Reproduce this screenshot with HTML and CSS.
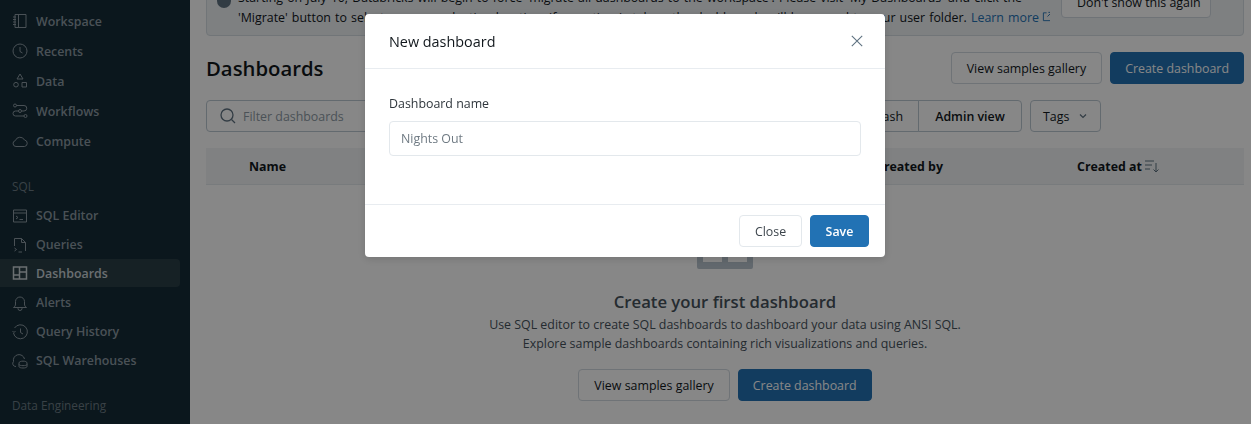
FILE: index.html
```html
<!DOCTYPE html>
<html lang="en">
<head>
<meta charset="utf-8">
<title>Dashboards</title>
<link rel="stylesheet" href="styles.css">
</head>
<body>
<div class="app">
  <nav class="sidebar">
    <ul class="nav-list nav-top">
      <li class="nav-item"><svg class="nav-icon" viewBox="0 0 16 16"><path d="M3 1.500h11v13H3zM6.500 1.500v13M1 4h3M1 6.500h3M1 9h3M1 11.500h3"/></svg>Workspace</li>
      <li class="nav-item"><svg class="nav-icon" viewBox="0 0 16 16"><circle cx="8" cy="8" r="7"/><path d="M8 4v4.500l2.500 1.500"/></svg>Recents</li>
      <li class="nav-item"><svg class="nav-icon" viewBox="0 0 16 16"><path d="M8 1l3 5H5zM10 9.500h4.500V14H10z"/><circle cx="4" cy="11.700" r="2.300"/></svg>Data</li>
      <li class="nav-item"><svg class="nav-icon" viewBox="0 0 16 16"><circle cx="3" cy="2.500" r="1.500"/><circle cx="8" cy="8" r="1.500"/><circle cx="13.500" cy="13" r="1.500"/><path d="M4.500 2.500H12a2.700 2.700 0 0 1 0 5.500H9.500M6.500 8H3.500a2.500 2.500 0 0 0 0 5H12"/></svg>Workflows</li>
      <li class="nav-item"><svg class="nav-icon" viewBox="0 0 16 16"><path d="M4 13.500a3 3 0 0 1-.7-5.900A5 5 0 0 1 12.500 7a3.300 3.300 0 0 1 0 6.500z"/></svg>Compute</li>
    </ul>
    <div class="nav-heading">SQL</div>
    <ul class="nav-list">
      <li class="nav-item nav-item-sql"><svg class="nav-icon" viewBox="0 0 16 16"><path d="M1.500 2h13v12h-13zM1.500 5h13M4 8l2 1.500L4 11M7.500 11.500H11"/></svg>SQL Editor</li>
      <li class="nav-item nav-item-sql"><svg class="nav-icon" viewBox="0 0 16 16"><path d="M2.500 9V1.500h7l4 4V14M9.500 1.500v4h4M2.500 11l2 1.500-2 1.500M6.500 15H10"/></svg>Queries</li>
      <li class="nav-item nav-item-sql is-active"><svg class="nav-icon" viewBox="0 0 16 16"><path d="M1.500 2h13v12h-13zM7.500 2v12M7.500 7h7M1.500 10h6"/></svg>Dashboards</li>
      <li class="nav-item nav-item-sql"><svg class="nav-icon" viewBox="0 0 16 16"><path d="M1.500 12.500c1.500-1 2-2 2-3.500V6.500a4.500 4.500 0 0 1 9 0V9c0 1.500.5 2.500 2 3.500zM6 12.500v1a2 2 0 0 0 4 0v-1"/></svg>Alerts</li>
      <li class="nav-item nav-item-sql"><svg class="nav-icon" viewBox="0 0 16 16"><path d="M2.500 4A7 7 0 1 1 1.500 9M.5 7l1.500 1.500L3.500 7M8.500 4.500V8.500l2.500 1.500"/></svg>Query History</li>
      <li class="nav-item nav-item-sql"><svg class="nav-icon" viewBox="0 0 16 16"><path d="M4 13.500a3 3 0 0 1-2.500-5A5.500 5.500 0 0 1 12.500 6M7 10c0-2.500 8-2.500 8 0v3.500c0 2-8 2-8 0zM7 11.500c0 1.500 8 1.500 8 0"/></svg>SQL Warehouses</li>
    </ul>
    <div class="nav-heading nav-heading-low">Data Engineering</div>
  </nav>

  <main class="content">
    <section class="banner">
      <span class="banner-dot"></span>
      <p class="banner-text">Starting on July 10, Databricks will begin to force 'migrate all dashboards to the workspace'. Please visit 'My Dashboards' and click the<br>'Migrate' button to select a new production location, if no action is taken, the dashboards will be moved to your user folder. <a class="link">Learn more<svg class="ext-icon" viewBox="0 0 12 12"><path d="M5 2H1.500v8.500H10V7M7 1.500h3.500V5M10.500 1.500L6 6"/></svg></a></p>
      <button class="btn banner-btn">Don't show this again</button>
      <svg class="banner-close" viewBox="0 0 12 12"><path d="M1.500 1.500l9 9M10.500 1.500l-9 9"/></svg>
    </section>

    <header class="page-head">
      <h1 class="page-title">Dashboards</h1>
      <div class="actions">
        <button class="btn">View samples gallery</button>
        <button class="btn btn-primary">Create dashboard</button>
      </div>
    </header>

    <div class="toolbar">
      <div class="filter">
        <svg class="filter-icon" viewBox="0 0 16 16"><circle cx="7" cy="7" r="6"/><path d="M11.500 11.500L15 15"/></svg>
        <span class="filter-text">Filter dashboards</span>
      </div>
      <div class="btn-group">
        <button class="btn group-btn">Favorites</button>
        <button class="btn group-btn">Trash</button>
        <button class="btn group-btn group-strong">Admin view</button>
      </div>
      <button class="btn tags-btn">Tags<svg class="chev" viewBox="0 0 10 10"><path d="M2 3.500l3 3 3-3"/></svg></button>
    </div>

    <div class="table-head">
      <span class="col-name">Name</span>
      <span class="col-by">Created by</span>
      <span class="col-at">Created at<svg class="sort-icon" viewBox="0 0 16 16"><path d="M1 3h9M1 7h7M1 11h5M12 5v9M9.500 11.500L12 14l2.500-2.500"/></svg></span>
    </div>

    <section class="empty">
      <svg class="empty-icon" viewBox="0 0 56 84"><path class="empty-shape" d="M2 0h52a2 2 0 0 1 2 2v80a2 2 0 0 1-2 2H2a2 2 0 0 1-2-2V2a2 2 0 0 1 2-2zM6 6v71h19V6zM31 6v71h19V6z"/></svg>
      <h2 class="empty-title">Create your first dashboard</h2>
      <p class="empty-text">Use SQL editor to create SQL dashboards to dashboard your data using ANSI SQL.</p>
      <p class="empty-text">Explore sample dashboards containing rich visualizations and queries.</p>
      <div class="empty-actions">
        <button class="btn">View samples gallery</button>
        <button class="btn btn-primary">Create dashboard</button>
      </div>
    </section>
  </main>
</div>

<div class="overlay">
  <div class="modal" role="dialog">
    <div class="modal-head">
      <h3 class="modal-title">New dashboard</h3>
      <svg class="modal-close" viewBox="0 0 12 12"><path d="M.8.800l10.400 10.400M11.200.800L.8 11.200"/></svg>
    </div>
    <div class="modal-body">
      <label class="field-label" for="name">Dashboard name</label>
      <input class="field-input" id="name" value="Nights Out">
    </div>
    <div class="modal-foot">
      <button class="btn btn-modal">Close</button>
      <button class="btn btn-save">Save</button>
    </div>
  </div>
</div>
</body>
</html>
```
FILE: styles.css
```css
* { box-sizing: border-box; }
html, body { margin: 0; height: 100%; overflow: hidden; }
body { font-family: "Open Sans", "Noto Sans", sans-serif; font-size: 12.4px; color: #11171c; background: #fff; }
ul { list-style: none; margin: 0; padding: 0; }
h1, h2, h3, p { margin: 0; font-weight: 400; }

.app { display: flex; height: 424px; overflow: hidden; }

.sidebar { width: 190px; flex: none; background: #152c37; padding: 6px 10px 0 0; }
.nav-item { display: flex; align-items: center; gap: 8px; height: 30px; padding-left: 12px; font-weight: 600; color: #8c9aa3; }
.nav-item-sql { height: 29px; }
.nav-icon { width: 16px; height: 16px; flex: none; fill: none; stroke: #8c9aa3; stroke-width: 1; }
.is-active { background: #2a3f47; border-radius: 0 4px 4px 0; color: #c9d1d6; height: 28px; margin: 0 0 1px; }
.is-active .nav-icon { stroke: #c9d1d6; stroke-width: 1.5; }
.nav-heading { font-size: 11.800px; color: #6d7c85; padding-left: 12px; height: 20px; line-height: 20px; margin-top: 20px; margin-bottom: 5px; }
.nav-heading-low { margin-top: 20px; }

.content { flex: 1; min-width: 0; padding: 0 7px 0 16px; }

.banner { display: flex; align-items: flex-start; height: 49px; margin-top: -13px; border: 1px solid #d5dde3; border-radius: 4px; background: #eef1f4; padding: 0 0 0 10px; }
.banner-dot { width: 14px; height: 14px; margin-top: 6px; border-radius: 50%; background: #5f7281; flex: none; }
.banner-text { flex: 1; margin-left: 7px; line-height: 20px; white-space: nowrap; overflow: hidden; word-spacing: .9px; }
.link { color: #2272b4; }
.ext-icon { width: 11px; height: 11px; margin-left: 3px; fill: none; stroke: #2272b4; stroke-width: 1; }
.banner-btn { margin: -2px 0 0 11px; width: 150px; padding: 0; flex: none; }
.banner-close { width: 11px; height: 11px; margin: 0 11px 0 10px; flex: none; fill: none; stroke: #5f7281; stroke-width: 1.2; }

.btn { font: inherit; height: 32px; padding: 0 15px; border: 1px solid #d1d9e1; border-radius: 4px; background: #fff; color: #11171c; white-space: nowrap; }
.btn-primary { background: #2272b4; border-color: #2272b4; color: #fff; padding: 0 14px; }

.page-head { display: flex; align-items: center; justify-content: space-between; margin-top: 16px; height: 32px; }
.page-title { font-size: 20.300px; font-weight: 600; }
.actions, .empty-actions { display: flex; gap: 8px; }

.toolbar { display: flex; gap: 8px; margin-top: 16px; height: 32px; padding-right: 143px; }
.filter { flex: 1; display: flex; align-items: center; gap: 7px; padding-left: 13px; border: 1px solid #bcc8d2; border-radius: 4px; background: #fff; }
.filter-icon { width: 16px; height: 16px; fill: none; stroke: #5f7281; stroke-width: 1.3; flex: none; }
.filter-text { color: #8e9ba5; }
.btn-group { display: flex; }
.group-btn { border-color: #bcc8d2; border-radius: 0; margin-left: -1px; }
.group-btn:first-child { border-radius: 4px 0 0 4px; }
.group-btn:last-child { border-radius: 0 4px 4px 0; }
.group-strong { font-weight: 600; width: 104px; padding: 0; }
.tags-btn { display: flex; align-items: center; justify-content: space-between; width: 71px; padding: 0 12px; border-color: #bcc8d2; }
.chev { width: 10px; height: 10px; fill: none; stroke: #5f7281; stroke-width: 1.2; }

.table-head { display: flex; align-items: center; height: 37px; margin-top: 16px; background: #f1f4f6; border-bottom: 1px solid #e3e8ec; font-weight: 700; }
.col-name { flex: 1; padding-left: 43px; }
.col-by { width: 203px; padding-left: 2px; }
.col-at { width: 167px; display: flex; align-items: center; gap: 2px; }
.sort-icon { width: 16px; height: 16px; fill: none; stroke: #5f7281; stroke-width: 1; }

.empty { display: flex; flex-direction: column; align-items: center; }
.empty-icon { width: 56px; height: 84px; flex: none; }
.empty-shape { fill: #b9c5cf; fill-rule: evenodd; }
.empty-title { font-size: 16.700px; font-weight: 600; color: #46525c; margin-top: 20px; line-height: 26px; }
.empty-text { color: #46525c; line-height: 19px; }
.empty-actions { margin-top: 16px; }

.overlay { position: fixed; inset: 0; background: rgba(0, 0, 0, .47); display: flex; justify-content: center; align-items: flex-start; padding: 14px 1px 0 0; }
.modal { width: 520px; height: 243px; background: #fff; border-radius: 4px; display: flex; flex-direction: column; box-shadow: 0 2px 8px rgba(0, 0, 0, .15); }
.modal-head { height: 55px; padding: 0 22px 0 24px; display: flex; align-items: center; justify-content: space-between; border-bottom: 1px solid #e8ecf0; }
.modal-title { font-size: 14.400px; font-weight: 400; color: #11171c; }
.modal-close { width: 12px; height: 12px; fill: none; stroke: #5f7281; stroke-width: 1.1; }
.modal-body { flex: 1; padding: 25px 24px 0; display: flex; flex-direction: column; }
.field-label { font-weight: 400; color: #2f363c; line-height: 20px; margin-bottom: 7px; }
.field-input { font: inherit; height: 35px; width: 472px; padding: 0 11px; border: 1px solid #e3e8ec; border-radius: 4px; color: #6f7a83; background: #fff; }
.modal-foot { height: 53px; display: flex; justify-content: flex-end; align-items: center; gap: 8px; padding: 0 16px; border-top: 1px solid #e8ecf0; }
.btn-modal { width: 63px; padding: 0; border-color: #e3e8ec; color: #3d454c; }
.btn-save { width: 59px; padding: 0; background: #2272b4; border-color: #2272b4; color: #fff; font-weight: 600; }
```
